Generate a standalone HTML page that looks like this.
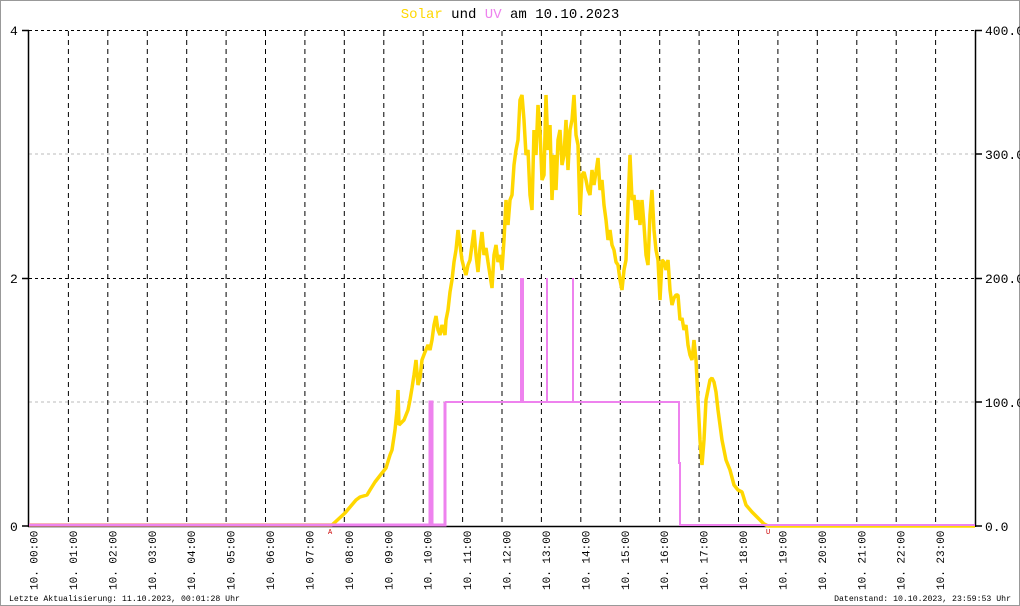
<!DOCTYPE html>
<html><head><meta charset="utf-8"><style>
html,body{margin:0;padding:0;background:#fff}
svg{display:block}
text{font-family:"Liberation Mono","DejaVu Sans Mono",monospace}
</style></head><body>
<svg width="1020" height="606" viewBox="0 0 1020 606" xmlns="http://www.w3.org/2000/svg">
<rect x="0.5" y="0.5" width="1019" height="605" fill="#fff" stroke="#999"/>
<text x="510" y="18" font-size="14" text-anchor="middle"><tspan fill="#ffd700">Solar</tspan> <tspan fill="#000">und</tspan> <tspan fill="#ee82ee">UV</tspan> <tspan fill="#000">am 10.10.2023</tspan></text>
<g stroke="#bbb" stroke-dasharray="3,3"><line x1="29" y1="154" x2="975" y2="154"/><line x1="29" y1="402" x2="975" y2="402"/></g>
<g stroke="#000" stroke-dasharray="3,3"><line x1="29" y1="30.5" x2="975" y2="30.5"/><line x1="29" y1="278.5" x2="975" y2="278.5"/></g>
<g id="vg" stroke="#000" stroke-dasharray="5,4">
<line x1="68.4" y1="31" x2="68.4" y2="526"/><line x1="107.8" y1="31" x2="107.8" y2="526"/><line x1="147.3" y1="31" x2="147.3" y2="526"/><line x1="186.7" y1="31" x2="186.7" y2="526"/><line x1="226.1" y1="31" x2="226.1" y2="526"/><line x1="265.5" y1="31" x2="265.5" y2="526"/><line x1="304.9" y1="31" x2="304.9" y2="526"/><line x1="344.3" y1="31" x2="344.3" y2="526"/><line x1="383.8" y1="31" x2="383.8" y2="526"/><line x1="423.2" y1="31" x2="423.2" y2="526"/><line x1="462.6" y1="31" x2="462.6" y2="526"/><line x1="502" y1="31" x2="502" y2="526"/><line x1="541.4" y1="31" x2="541.4" y2="526"/><line x1="580.8" y1="31" x2="580.8" y2="526"/><line x1="620.3" y1="31" x2="620.3" y2="526"/><line x1="659.7" y1="31" x2="659.7" y2="526"/><line x1="699.1" y1="31" x2="699.1" y2="526"/><line x1="738.5" y1="31" x2="738.5" y2="526"/><line x1="777.9" y1="31" x2="777.9" y2="526"/><line x1="817.3" y1="31" x2="817.3" y2="526"/><line x1="856.8" y1="31" x2="856.8" y2="526"/><line x1="896.2" y1="31" x2="896.2" y2="526"/><line x1="935.6" y1="31" x2="935.6" y2="526"/>
</g>
<g stroke="#000" stroke-width="1.5">
<line x1="28.5" y1="30" x2="28.5" y2="527"/><line x1="975.5" y1="30" x2="975.5" y2="527"/>
<line x1="22" y1="30.5" x2="29" y2="30.5"/><line x1="22" y1="278.5" x2="29" y2="278.5"/><line x1="22" y1="526" x2="29" y2="526"/>
<line x1="975" y1="30.5" x2="982" y2="30.5"/><line x1="975" y1="154" x2="982" y2="154"/><line x1="975" y1="278.5" x2="982" y2="278.5"/><line x1="975" y1="402" x2="982" y2="402"/><line x1="975" y1="526" x2="982" y2="526"/>
<line x1="28" y1="526.5" x2="975" y2="526.5"/>
</g>
<g font-size="13" fill="#000">
<text x="10" y="35">4</text><text x="10" y="283">2</text><text x="10" y="531">0</text>
<text x="985" y="35">400.0</text><text x="985" y="159">300.0</text><text x="985" y="283">200.0</text><text x="985" y="407">100.0</text><text x="985" y="531">0.0</text>
</g>
<polyline fill="none" stroke="#ffd700" stroke-width="3.5" stroke-linejoin="bevel" points="29,525 330,525 332,525 345,513 356,500 360,497 367,495 370,490 375,482 382,473 386,468 390,455 392,450 395,430 397,410 398,390 399,425 402,422 404,420 408,410 410,400 412,388 414,375 416,360 418,385 420,378 422,360 425,352 428,345 430,350 432,340 434,325 436,316 438,330 440,335 442,325 445,335 446,320 448,310 450,292 452,280 454,262 456,250 458,230 460,245 462,260 464,268 466,275 468,265 470,260 472,245 474,230 476,255 478,272 480,248 482,232 484,255 486,248 488,262 490,275 492,288 494,255 496,245 498,262 500,255 502,270 504,240 506,200 508,225 510,200 512,195 514,165 516,150 518,140 520,100 522,95 524,120 526,155 528,150 530,195 532,210 534,130 536,155 538,105 540,130 542,180 544,175 546,95 548,150 550,125 552,200 554,155 556,190 558,140 560,130 562,165 564,155 566,120 568,170 570,130 572,120 574,95 576,135 578,145 580,215 582,175 584,172 586,180 588,190 590,195 592,170 594,185 596,172 598,158 600,190 602,180 604,205 606,220 608,240 610,230 612,245 614,250 616,262 618,265 620,280 622,290 624,270 626,260 628,205 630,155 632,200 634,195 636,220 638,200 640,225 642,200 644,225 646,255 648,265 650,215 652,190 654,230 656,250 658,260 660,300 662,260 664,262 666,270 668,260 670,290 672,305 674,298 676,295 678,295 680,320 682,318 684,330 686,325 688,345 690,355 692,360 694,340 696,360 698,400 700,440 702,465 704,440 706,400 708,390 710,380 712,378 714,382 716,392 718,410 720,425 722,440 724,450 726,460 730,470 734,485 738,490 742,492 746,505 752,512 758,518 764,524 768,526 975,526"/>
<g fill="none" stroke="#ee82ee" stroke-width="2">
<polyline stroke-width="3" points="29,525 430,525 430,402 432,402 432,525 445,525 445,402"/>
<polyline points="445,402 679,402 679,463 680,463 680,525 975,525"/>
<rect x="520" y="278" width="4" height="124" fill="#ee82ee" stroke="none"/>
<line x1="547" y1="278" x2="547" y2="402"/>
<line x1="573" y1="278" x2="573" y2="402"/>
</g>
<text x="328" y="534" font-size="7" fill="#c00">A</text>
<text x="766" y="534" font-size="7" fill="#c00">U</text>
<g font-size="11" fill="#000">
<text transform="translate(37.5,590) rotate(-90)">10. 00:00</text>
<text transform="translate(76.9,590) rotate(-90)">10. 01:00</text>
<text transform="translate(116.3,590) rotate(-90)">10. 02:00</text>
<text transform="translate(155.8,590) rotate(-90)">10. 03:00</text>
<text transform="translate(195.2,590) rotate(-90)">10. 04:00</text>
<text transform="translate(234.6,590) rotate(-90)">10. 05:00</text>
<text transform="translate(274,590) rotate(-90)">10. 06:00</text>
<text transform="translate(313.4,590) rotate(-90)">10. 07:00</text>
<text transform="translate(352.8,590) rotate(-90)">10. 08:00</text>
<text transform="translate(392.3,590) rotate(-90)">10. 09:00</text>
<text transform="translate(431.7,590) rotate(-90)">10. 10:00</text>
<text transform="translate(471.1,590) rotate(-90)">10. 11:00</text>
<text transform="translate(510.5,590) rotate(-90)">10. 12:00</text>
<text transform="translate(549.9,590) rotate(-90)">10. 13:00</text>
<text transform="translate(589.3,590) rotate(-90)">10. 14:00</text>
<text transform="translate(628.8,590) rotate(-90)">10. 15:00</text>
<text transform="translate(668.2,590) rotate(-90)">10. 16:00</text>
<text transform="translate(707.6,590) rotate(-90)">10. 17:00</text>
<text transform="translate(747,590) rotate(-90)">10. 18:00</text>
<text transform="translate(786.4,590) rotate(-90)">10. 19:00</text>
<text transform="translate(825.8,590) rotate(-90)">10. 20:00</text>
<text transform="translate(865.3,590) rotate(-90)">10. 21:00</text>
<text transform="translate(904.7,590) rotate(-90)">10. 22:00</text>
<text transform="translate(944.1,590) rotate(-90)">10. 23:00</text>
</g>
<text x="9" y="601" font-size="8.2" fill="#000">Letzte Aktualisierung: 11.10.2023, 00:01:28 Uhr</text>
<text x="1011" y="601" font-size="8.2" fill="#000" text-anchor="end">Datenstand: 10.10.2023, 23:59:53 Uhr</text>
</svg>
</body></html>
